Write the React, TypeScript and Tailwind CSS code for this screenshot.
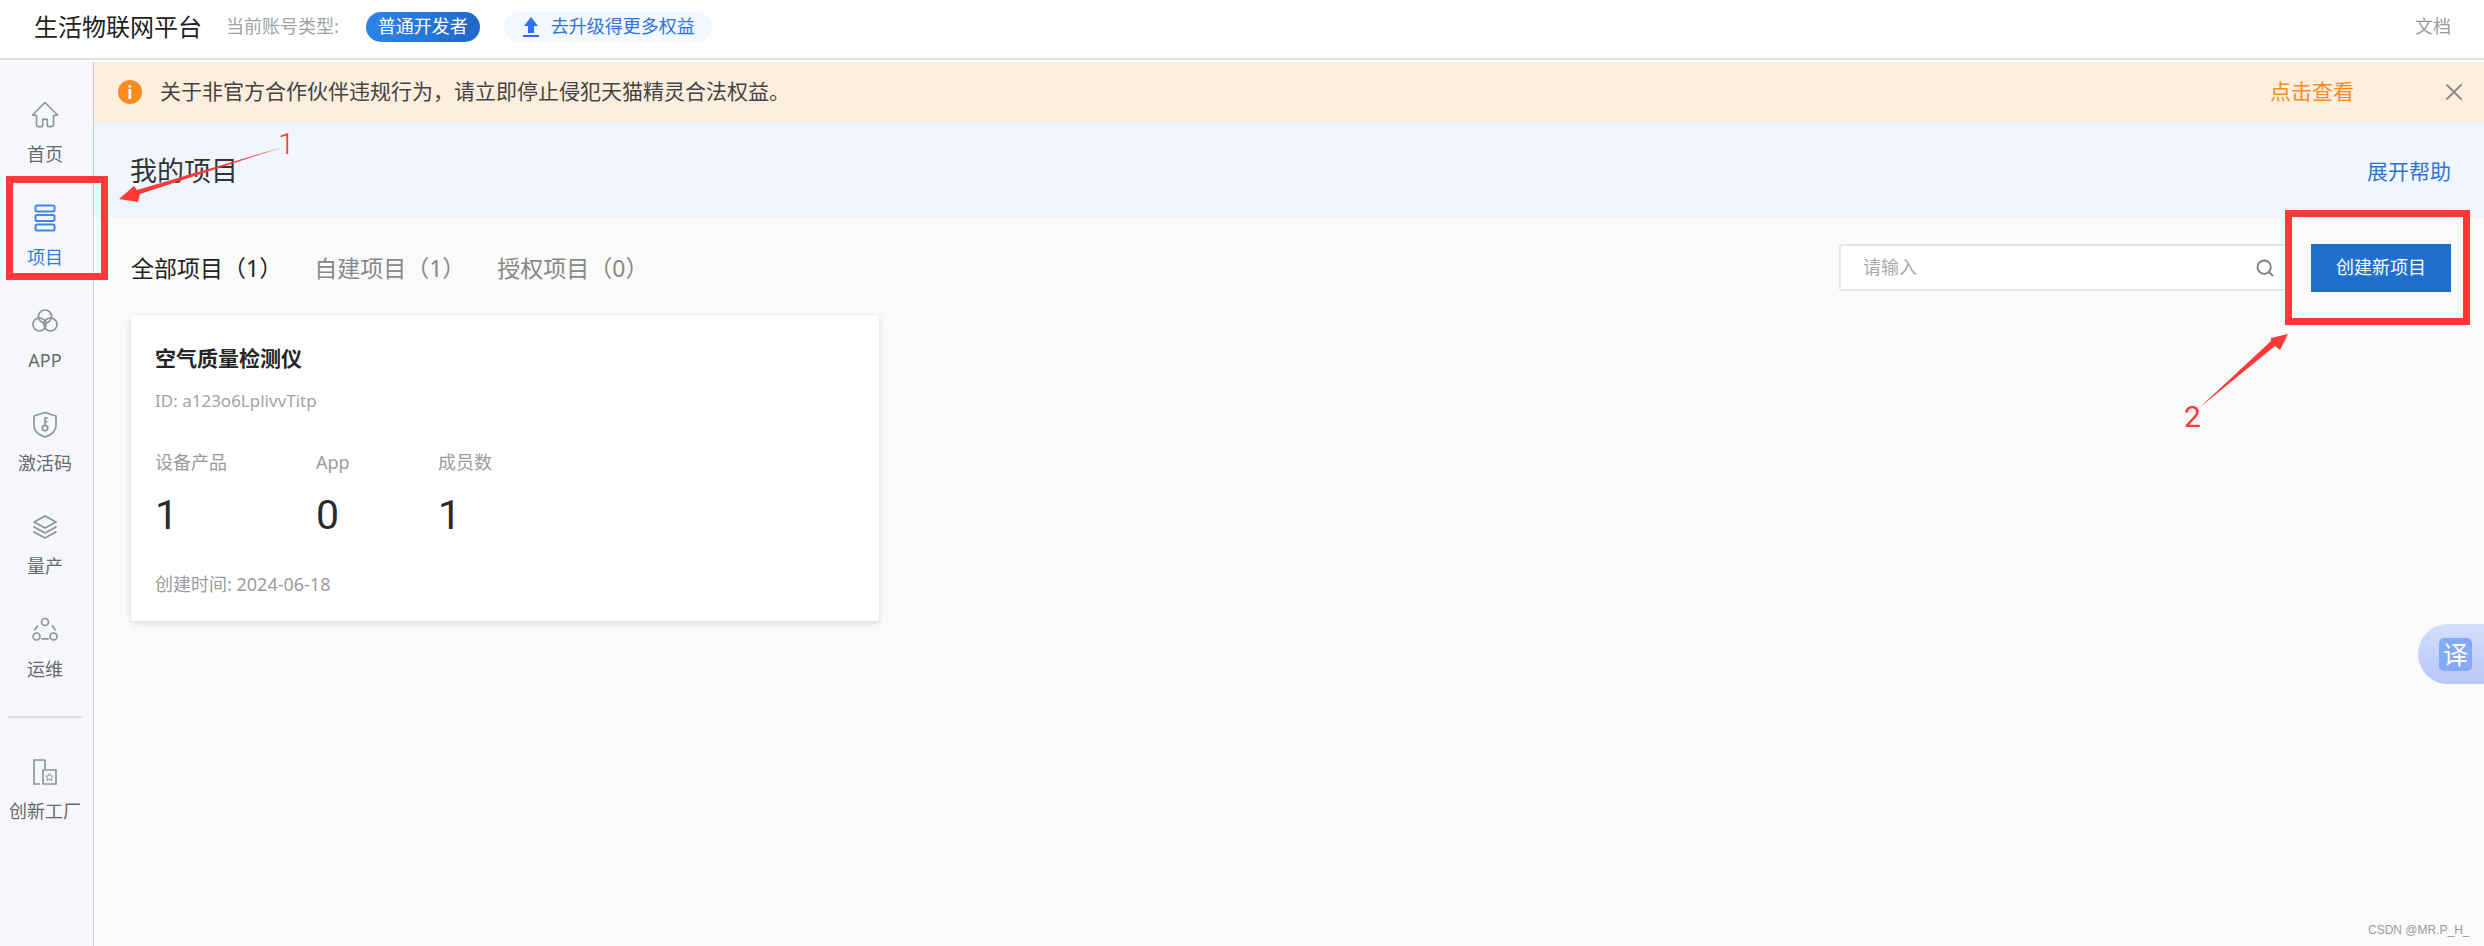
import { Search, X } from 'lucide-react'
import type { ReactNode } from 'react'

function HomeIcon() {
    return (
        <svg viewBox="0 0 28 28" className="h-7 w-7" fill="none" stroke="#8d949c" strokeWidth="1.6" strokeLinejoin="round" strokeLinecap="round">
            <path d="M14 1.500 1.500 14l4 .6v9c0 1.200.8 2 2 2h3c.8 0 1.200-.5 1.200-1.200v-6h4.600v6c0 .7.4 1.200 1.200 1.200h3c1.200 0 2-.8 2-2v-9l4-.6Z" />
        </svg>
    )
}

function ProjectIcon() {
    return (
        <svg viewBox="0 0 28 28" className="h-7 w-7" fill="none" stroke="#3d86f4" strokeWidth="2">
            <rect x="4.500" y="1.500" width="19" height="6" rx="1.500" />
            <rect x="4.500" y="11" width="19" height="6" rx="1.500" />
            <rect x="4.500" y="20.500" width="19" height="6" rx="1.500" />
        </svg>
    )
}

function AppIcon() {
    return (
        <svg viewBox="0 0 28 28" className="h-7 w-7" fill="none" stroke="#8d949c" strokeWidth="1.700">
            <circle cx="14" cy="9.500" r="6.500" />
            <circle cx="8.500" cy="17.500" r="6.500" />
            <circle cx="19.500" cy="17.500" r="6.500" />
        </svg>
    )
}

function ShieldIcon() {
    return (
        <svg viewBox="0 0 28 28" className="h-7 w-7" fill="none" stroke="#8d949c" strokeWidth="1.700" strokeLinejoin="round">
            <path d="M14 2.500 25 6v9.500c0 5.500-5 9.500-11 11.500C8 25 3 21 3 15.500V6Z" />
            <circle cx="14" cy="18" r="2.700" />
            <path d="M14 15V8h3M14 11.500h2.500" />
        </svg>
    )
}

function LayersIcon() {
    return (
        <svg viewBox="0 0 28 28" className="h-7 w-7" fill="none" stroke="#8d949c" strokeWidth="1.700" strokeLinejoin="round">
            <path d="M14 3 25 9l-11 6L3 9Z" />
            <path d="m4 13.500-1 .5 11 6 11-6-1-.5" />
            <path d="m4 18.500-1 .5 11 6 11-6-1-.5" />
        </svg>
    )
}

function OpsIcon() {
    return (
        <svg viewBox="0 0 28 28" className="h-7 w-7" fill="none" stroke="#8d949c" strokeWidth="1.700" strokeLinecap="round">
            <circle cx="14" cy="6" r="3.500" />
            <circle cx="5.500" cy="20.500" r="3.500" />
            <circle cx="22.500" cy="20.500" r="3.500" />
            <path d="M11 22.800h6M3.800 13.800 6.500 10M24.200 13.800 21.500 10" />
        </svg>
    )
}

function FactoryIcon() {
    return (
        <svg viewBox="0 0 28 28" className="h-7 w-7" fill="none" stroke="#8d949c" strokeWidth="1.700" strokeLinejoin="round">
            <path d="M9 26H3V2h11v9" />
            <rect x="12" y="12" width="13" height="14" />
            <path d="m18.500 15.500 1.200 2.400 2.500.3-1.800 1.700.5 2.500-2.400-1.200-2.400 1.200.5-2.500-1.800-1.700 2.500-.3Z" strokeWidth="1" />
        </svg>
    )
}

function NavItem({ icon, label, active }: { icon: ReactNode; label: string; active?: boolean }) {
    return (
        <div className="flex h-[103px] flex-col items-center pt-3">
            {icon}
            <span className={`mt-[15px] text-[18px] leading-5 ${active ? 'text-[#2f7ae5]' : 'text-[#666a6e]'}`}>{label}</span>
        </div>
    )
}

function Sidebar() {
    return (
        <aside className="flex w-[94px] shrink-0 flex-col border-r border-[#c9cbce] bg-[#f5f7fa] pr-[3px] pt-[27px]">
            <NavItem icon={<HomeIcon />} label="首页" />
            <NavItem icon={<ProjectIcon />} label="项目" active />
            <NavItem icon={<AppIcon />} label="APP" />
            <NavItem icon={<ShieldIcon />} label="激活码" />
            <NavItem icon={<LayersIcon />} label="量产" />
            <NavItem icon={<OpsIcon />} label="运维" />
            <div className="mx-[8px] mt-[9px] h-0.5 bg-[#dfe1e4]" />
            <div className="mt-[40px] flex flex-col items-center">
                <FactoryIcon />
                <span className="mt-[15px] text-[18px] leading-5 text-[#666a6e]">创新工厂</span>
            </div>
        </aside>
    )
}

function Header() {
    return (
        <header className="flex h-[60px] shrink-0 items-center border-b-2 border-[#dcdee0] bg-white pb-[5px] pl-[34px] pr-[33px]">
            <span className="text-[24px] leading-8 text-[#222]">生活物联网平台</span>
            <span className="ml-6 text-[18px] text-[#a3a3a3]">当前账号类型:</span>
            <span className="ml-[27px] flex h-[30px] w-[114px] items-center justify-center rounded-full bg-gradient-to-r from-[#2b84ea] to-[#2069c8] text-[18px] text-white">
                普通开发者
            </span>
            <span className="ml-6 flex h-[30px] w-[208px] items-center rounded-full bg-[#f3f7fe] pl-[18px] text-[18px] text-[#2f74e0]">
                <svg viewBox="0 0 18 22" className="mr-[11px] h-[22px] w-[18px]" fill="#2f6ff0">
                    <path d="M9 1 16 10h-4v7H6v-7H2Z" />
                    <rect x="1" y="19" width="16" height="2" />
                </svg>
                去升级得更多权益
            </span>
            <span className="ml-auto text-[18px] text-[#9a9a9a]">文档</span>
        </header>
    )
}

function Notice() {
    return (
        <div className="flex h-[60px] shrink-0 items-center bg-[#fdeedd] pl-[24px] pr-[16px]">
            <span className="flex h-6 w-6 items-center justify-center rounded-full bg-[#fb8b1e] font-['Roboto',sans-serif] text-[18px] font-bold text-white">i</span>
            <span className="ml-[18px] text-[21px] text-[#444]">关于非官方合作伙伴违规行为，请立即停止侵犯天猫精灵合法权益。</span>
            <span className="ml-auto text-[21px] text-[#fb8b1e]">点击查看</span>
            <X className="ml-[86px] h-7 w-7 text-[#8e8e8e]" strokeWidth={1.700} />
        </div>
    )
}

function Tab({ label, count, active }: { label: string; count: number; active?: boolean }) {
    return (
        <span className={`text-[23px] leading-8 ${active ? 'text-[#222]' : 'text-[#888]'}`}>
            {label}（{count}）
        </span>
    )
}

function Stat({ label, value, className }: { label: string; value: number; className: string }) {
    return (
        <div className={className}>
            <div className="text-[18px] leading-6 text-[#9b9b9b]">{label}</div>
            <div className="mt-[18px] font-['Roboto',sans-serif] text-[41px] leading-[46px] text-[#2b2b2b]">{value}</div>
        </div>
    )
}

function ProjectCard() {
    return (
        <div className="ml-[37px] mt-[23px] h-[306px] w-[748px] rounded-[3px] bg-white px-6 pt-[28px] shadow-[0_2px_6px_rgba(0,0,0,0.14)]">
            <div className="text-[21px] font-bold leading-[30px] text-[#262626]">空气质量检测仪</div>
            <div className="mt-[16px] text-[17px] leading-6 text-[#a3a3a3]">ID: a123o6LplivvTitp</div>
            <div className="mt-[37px] flex">
                <Stat label="设备产品" value={1} className="w-[161px]" />
                <Stat label="App" value={0} className="w-[122px]" />
                <Stat label="成员数" value={1} className="w-[100px]" />
            </div>
            <div className="mt-[34px] text-[18px] leading-6 text-[#9b9b9b]">创建时间: 2024-06-18</div>
        </div>
    )
}

function Toolbar() {
    return (
        <div className="flex h-[74px] items-center justify-between pb-[1px] pl-[37px] pr-[33px] pt-[26px]">
            <div className="flex gap-[32px]">
                <Tab label="全部项目" count={1} active />
                <Tab label="自建项目" count={1} />
                <Tab label="授权项目" count={0} />
            </div>
            <div className="flex items-center gap-[23px]">
                <div className="flex h-[47px] w-[449px] items-center justify-between rounded-[3px] border-2 border-[#e6e6e6] bg-white pl-[22px] pr-[11px]">
                    <span className="text-[18px] text-[#a9a9a9]">请输入</span>
                    <Search className="h-5 w-5 text-[#7d7d7d]" strokeWidth={2.200} />
                </div>
                <button className="flex h-[48px] w-[140px] items-center justify-center bg-[#1f6fcc] text-[18px] text-white">创建新项目</button>
            </div>
        </div>
    )
}

function Annotations() {
    return (
        <>
            <div className="absolute left-[6px] top-[176px] h-[104px] w-[102px] border-[7px] border-[#ff3838]" />
            <div className="absolute left-[2285px] top-[210px] h-[115px] w-[185px] border-[7px] border-[#ff3838]" />
            <svg viewBox="0 0 175 65" className="absolute left-[115px] top-[140px] h-[65px] w-[175px]" fill="#ff3838">
                <polygon points="4,59 19,46 22,50 168,7 25,54 23,62" />
            </svg>
            <svg viewBox="0 0 105 85" className="absolute left-[2190px] top-[330px] h-[85px] w-[105px]" fill="#ff3838">
                <polygon points="98,4 90,20 85,16 9,78 81,11 81,8" />
            </svg>
            <span className="absolute left-[278px] top-[128px] font-['Roboto',sans-serif] text-[30px] font-light leading-8 text-[#ff3838]">1</span>
            <span className="absolute left-[2184px] top-[401px] font-['Roboto',sans-serif] text-[30px] leading-8 text-[#ff3838]">2</span>
        </>
    )
}

export default function App() {
    return (
        <div className="relative flex h-[946px] w-full flex-col overflow-hidden bg-[#fafafa] font-['Noto_Sans','Noto_Sans_CJK_SC',sans-serif]">
            <Header />
            <div className="flex min-h-0 flex-1 pt-[2px]">
                <Sidebar />
                <main className="min-w-0 flex-1">
                    <Notice />
                    <div className="flex h-[96px] items-center justify-between bg-[#f1f6fe] pl-[36px] pr-[33px] pt-[3px]">
                        <h1 className="text-[27px] text-[#333]">我的项目</h1>
                        <span className="text-[21px] text-[#2f74d0]">展开帮助</span>
                    </div>
                    <Toolbar />
                    <ProjectCard />
                </main>
            </div>
            <div className="absolute right-0 top-[624px] flex h-[60px] w-[66px] items-center rounded-l-full bg-gradient-to-b from-[#d3defc] to-[#b8c6f8] pl-[21px]">
                <span className="flex h-[33px] w-[33px] items-center justify-center rounded-[5px] bg-[#84aaf6] text-[25px] leading-none text-white">译</span>
            </div>
            <span className="absolute left-[2368px] top-[922px] font-['Liberation_Sans',sans-serif] text-[12px] leading-4 text-[#9a9a9a]">CSDN @MR.P_H_</span>
            <Annotations />
        </div>
    )
}
